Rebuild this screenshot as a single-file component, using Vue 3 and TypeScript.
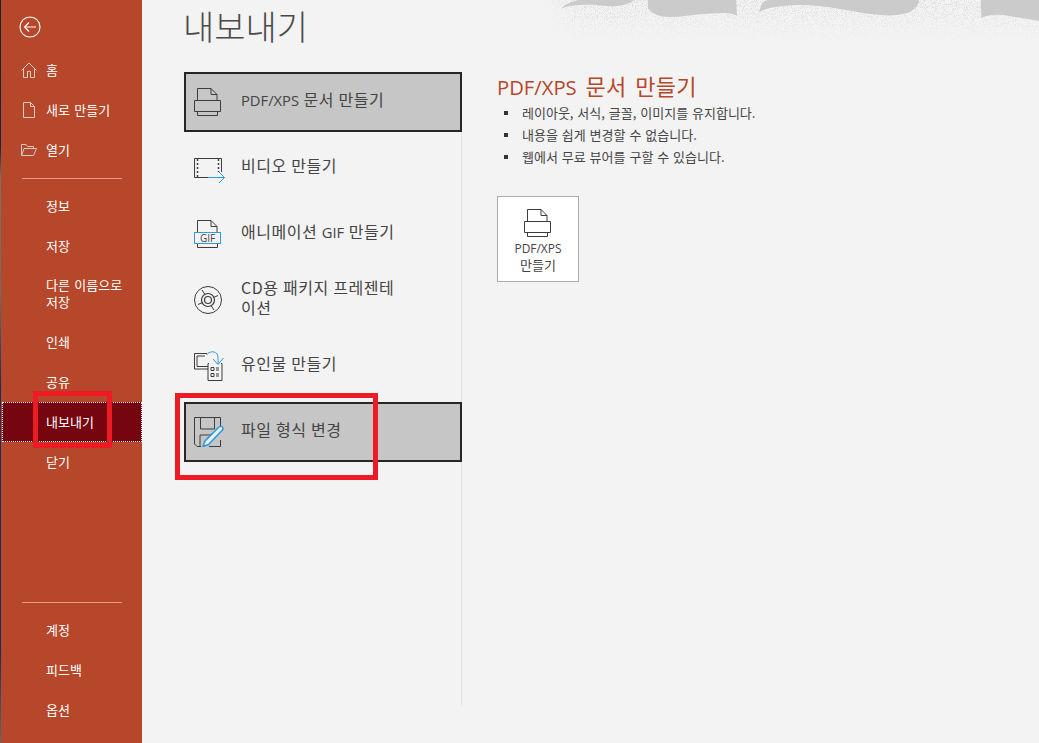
<script setup lang="ts">
interface NavItem {
  label: string
  icon?: 'home' | 'new' | 'open'
  active?: boolean
  tall?: boolean
}

const topNav: NavItem[] = [
  { label: '홈', icon: 'home' },
  { label: '새로 만들기', icon: 'new' },
  { label: '열기', icon: 'open' }
]

const midNav: NavItem[] = [
  { label: '정보' },
  { label: '저장' },
  { label: '다른 이름으로 저장', tall: true },
  { label: '인쇄' },
  { label: '공유' },
  { label: '내보내기', active: true },
  { label: '닫기' }
]

const bottomNav: NavItem[] = [{ label: '계정' }, { label: '피드백' }, { label: '옵션' }]

const bullets = [
  '레이아웃, 서식, 글꼴, 이미지를 유지합니다.',
  '내용을 쉽게 변경할 수 없습니다.',
  '웹에서 무료 뷰어를 구할 수 있습니다.'
]
</script>

<template>
  <div class="window">
    <div class="strip"></div>
    <nav class="sidebar">
      <button class="back" aria-label="뒤로">
        <svg width="22" height="22" viewBox="0 0 22 22" fill="none" stroke="#fff" stroke-width="1.1">
          <circle cx="11" cy="11" r="10" />
          <path d="M17 11H5.500M10 6.500 5.500 11l4.500 4.500" />
        </svg>
      </button>

      <div v-for="item in topNav" :key="item.label" class="nav-item">
        <span class="nav-icon">
          <svg v-if="item.icon === 'home'" width="16" height="16" viewBox="0 0 16 16" fill="none" stroke="#e0cdc6" stroke-width="1">
            <path d="M.5 8.500 8 1l7.500 7.500M2.500 6.500v9h4v-6h3v6h4v-9" />
          </svg>
          <svg v-else-if="item.icon === 'new'" width="12" height="16" viewBox="0 0 12 16" fill="none" stroke="#e0cdc6" stroke-width="1">
            <path d="M.5.5h7l4 4v11H.5zM7.500.5v4h4" />
          </svg>
          <svg v-else width="16" height="12" viewBox="0 0 16 12" fill="none" stroke="#cfcbc8" stroke-width="1">
            <path d="M.5 11.500V.5h4.500l1.500 2h6V4.500M.5 11.500h12l3-7H3z" />
          </svg>
        </span>
        <span class="nav-label">{{ item.label }}</span>
      </div>

      <div class="divider first"></div>

      <div
        v-for="item in midNav"
        :key="item.label"
        class="nav-item plain"
        :class="{ active: item.active, tall: item.tall }"
      >
        <span class="nav-label">{{ item.label }}</span>
      </div>

      <div class="divider last"></div>

      <div v-for="item in bottomNav" :key="item.label" class="nav-item plain">
        <span class="nav-label">{{ item.label }}</span>
      </div>
    </nav>

    <main class="content">
      <svg class="backdrop" width="497" height="42" viewBox="542 0 497 42" aria-hidden="true">
        <defs>
          <filter id="grain" x="0" y="0" width="100%" height="100%" color-interpolation-filters="sRGB">
            <feTurbulence type="fractalNoise" baseFrequency="0.9" numOctaves="2" seed="4" />
            <feColorMatrix values="0 0 0 0 0.86  0 0 0 0 0.86  0 0 0 0 0.86  0 0 0 9 -4.6" />
          </filter>
          <linearGradient id="fade" x1="0" y1="0" x2="0" y2="1">
            <stop offset="0" stop-color="#fff" stop-opacity="0.9" />
            <stop offset="1" stop-color="#fff" stop-opacity="0" />
          </linearGradient>
          <linearGradient id="edge" x1="0" y1="0" x2="1" y2="0">
            <stop offset="0" stop-color="#f3f3f3" />
            <stop offset="1" stop-color="#f3f3f3" stop-opacity="0" />
          </linearGradient>
          <mask id="fadeMask">
            <rect x="542" y="0" width="497" height="42" fill="url(#fade)" />
          </mask>
        </defs>
        <g mask="url(#fadeMask)">
          <rect x="542" y="0" width="497" height="42" filter="url(#grain)" />
        </g>
        <rect x="542" y="0" width="40" height="42" fill="url(#edge)" />
        <g fill="#cbcbcb">
          <path d="M562 8C566 3 572 2 578 0H634C628 5 618 7 606 6 590 4 574 4 562 8Z" />
          <path d="M648 0V8C652 14 660 17 670 17 684 17 700 13 722 13 730 13 735 14 737 16L736 0Z" />
          <path d="M759 12C762 0 766 0 772 0H919C918 8 912 13 898 15 880 17 860 12 840 9 815 4 790 4 775 7 768 8 762 10 759 12Z" />
          <path d="M981 0C980 6 982 12 981 18 990 14 998 14 1010 16L1039 21V0Z" />
        </g>
      </svg>

      <h1 class="title">내보내기</h1>

      <div class="columns">
        <section class="options">
          <div class="option selected">
            <span class="option-slot">
              <svg width="28" height="28" viewBox="0 0 28 28" fill="none" stroke="#3c3c3c" stroke-width="1">
                <path d="M3.500 12V.5H17l6 6V12M17 .5v6h6M.5 12.500h26v11H.5zM3.500 24v3.500h20V24" />
              </svg>
            </span>
            <span class="option-label"><span class="latin">PDF/XPS</span> 문서 만들기</span>
          </div>

          <div class="option">
            <span class="option-slot">
              <svg class="shift-video" width="31" height="26" viewBox="0 0 31 26" fill="none" stroke="#3c3c3c" stroke-width="1">
                <path d="M14 19.500H.5V.5h27V14" />
                <path d="M3.500 1v18M24.500 1v13" stroke-dasharray="2 2" stroke-width="1.500" />
                <path d="M14 19.500h16.500M25 14l5.500 5.500L25 25" stroke="#2f9bdc" />
              </svg>
            </span>
            <span class="option-label">비디오 만들기</span>
          </div>

          <div class="option">
            <span class="option-slot">
              <svg width="28" height="28" viewBox="0 0 28 28" fill="none" stroke="#3c3c3c" stroke-width="1">
                <path d="M3.500 12V.5H17l6 6V12M17 .5v6h6M3.500 24v3.500h20V24" />
                <rect x=".5" y="12.500" width="26" height="11" stroke="#2f9bdc" />
                <text x="13.500" y="22" text-anchor="middle" class="gif-text">GIF</text>
              </svg>
            </span>
            <span class="option-label">애니메이션 <span class="latin">GIF</span> 만들기</span>
          </div>

          <div class="option">
            <span class="option-slot">
              <svg width="28" height="28" viewBox="0 0 28 28" fill="none" stroke="#3c3c3c" stroke-width="1">
                <circle cx="14" cy="14" r="13.500" />
                <circle cx="14" cy="14" r="6.500" stroke-width="1.200" />
                <circle cx="14" cy="14" r="3.500" stroke-width="1.200" />
                <path d="M8 4 11 8.500M20 24 17 19.500M4 18.500 8.500 16.500M24 9.500 19.500 11.500" />
              </svg>
            </span>
            <span class="option-label wrap">CD용 패키지 프레젠테이션</span>
          </div>

          <div class="option">
            <span class="option-slot">
              <svg width="30" height="30" viewBox="0 0 30 30" fill="none" stroke="#3c3c3c" stroke-width="1">
                <path d="M13 2.500H.5v15.500H14M3 5h8M3 5v10.500h11" />
                <path d="M15 12.500h-1v17h14v-17h-1" />
                <path d="M17 16.500h3v3h-3zM17 22.500h3v3h-3zM22 17h3M22 19h3M22 23h3M22 25h3" />
                <path d="M12.500 4C15 0 22 -.5 23.500 4c.7 2 .7 5 .5 9M19 8l5 5.500L29.500 7" stroke="#2f9bdc" />
              </svg>
            </span>
            <span class="option-label">유인물 만들기</span>
          </div>

          <div class="option selected">
            <span class="option-slot">
              <svg width="30" height="30" viewBox="0 0 30 30" fill="none" stroke="#3c3c3c" stroke-width="1">
                <path d="M7 29.500H3l-2.500-2.500V.5h26v12M26.500 23v6.500H15" />
                <path d="M6.500 .5V12h14V.5M6 29V18h14" />
                <path d="M9 29.500 11 24 25 10c1-.9 2.200-.9 3.200 0s1 2.200 0 3.200L14.500 27.500z" fill="#e8f2f8" stroke="#2f9bdc" stroke-width="1.600" />
              </svg>
            </span>
            <span class="option-label">파일 형식 변경</span>
          </div>
        </section>

        <section class="details">
          <h2 class="details-title"><span class="latin">PDF/XPS</span> 문서 만들기</h2>
          <ul class="bullets">
            <li v-for="line in bullets" :key="line">{{ line }}</li>
          </ul>
          <button class="export-btn">
            <svg width="28" height="28" viewBox="0 0 28 28" fill="none" stroke="#3c3c3c" stroke-width="1">
              <path d="M3.500 12V.5H17l6 6V12M17 .5v6h6M.5 12.500h26v11H.5zM3.500 24v3.500h20V24" />
            </svg>
            <span class="export-text"><span class="latin">PDF/XPS</span><br />만들기</span>
          </button>
        </section>
      </div>
    </main>

    <div class="mark mark-nav"></div>
    <div class="mark mark-option"></div>
  </div>
</template>

<style scoped>
.window {
  position: relative;
  display: flex;
  width: 1039px;
  height: 743px;
  overflow: hidden;
  background: #f3f3f3;
  font-family: "Noto Sans CJK KR", "Open Sans", sans-serif;
}

.latin {
  font-family: "Open Sans", sans-serif;
  font-size: 0.92em;
  line-height: 1;
  letter-spacing: 0;
}

.strip {
  flex: 0 0 1px;
  background: linear-gradient(180deg, #222 0, #1c2540 20%, #7d7468 24%, #6f6a62 40%, #1f2d5c 52%, #1f2d5c 88%, #666 100%);
}

.sidebar {
  flex: 0 0 141px;
  display: flex;
  flex-direction: column;
  padding-top: 16px;
  background: #b7472a;
  color: #fff;
  font-size: 13px;
  word-spacing: 1.500px;
}

.back {
  display: block;
  width: 22px;
  height: 22px;
  margin: 0 0 12px 18px;
  padding: 0;
  border: 0;
  background: none;
}

.nav-item {
  display: flex;
  align-items: center;
  height: 40px;
  flex: none;
}

.nav-icon {
  display: flex;
  justify-content: center;
  align-items: center;
  box-sizing: border-box;
  width: 45px;
  padding-left: 13px;
  padding-right: 3px;
}

.nav-icon svg {
  display: block;
}

.nav-item.plain {
  padding-left: 45px;
}

.nav-item.tall {
  height: 56px;
  padding-right: 12px;
  line-height: 17px;
}

.nav-item.active {
  box-sizing: border-box;
  margin-left: 1px;
  outline: 1px dotted #fff;
  outline-offset: -1px;
  background: #750610;
  padding-left: 44px;
}

.nav-label {
  margin-bottom: 2px;
  word-break: keep-all;
}

.divider {
  flex: none;
  height: 1px;
  margin-left: 21px;
  width: 100px;
  background: #e79a85;
}

.divider.first {
  margin-top: 8px;
  margin-bottom: 7px;
}

.divider.last {
  margin-top: auto;
  margin-bottom: 7px;
}

.sidebar > .nav-item:last-child {
  margin-bottom: 13px;
}

.content {
  position: relative;
  flex: 1;
  min-width: 0;
}

.backdrop {
  position: absolute;
  top: 0;
  right: 0;
}

.title {
  position: relative;
  box-sizing: border-box;
  height: 72px;
  margin: 0;
  padding: 1px 0 0 41px;
  font-size: 34px;
  line-height: 50px;
  font-weight: 300;
  color: #4a4a4a;
}

.columns {
  display: flex;
}

.options {
  flex: 0 0 320px;
  box-sizing: border-box;
  height: 633px;
  padding-left: 42px;
  border-right: 1px solid #e1e1e1;
}

.option {
  display: flex;
  align-items: center;
  box-sizing: border-box;
  height: 60px;
  margin-right: -1px;
  margin-bottom: 6px;
  padding-left: 8px;
  border: 2px solid transparent;
  color: #444;
  font-size: 16px;
  letter-spacing: 0.5px;
  word-spacing: 0.5px;
}

.option.selected {
  border-color: #262626;
  background: #c6c6c6;
}

.option-slot {
  flex: 0 0 47px;
  display: flex;
}

.option-slot svg {
  display: block;
}

.shift-video {
  margin-top: 6px;
}

.option-label {
  margin-bottom: 6px;
  line-height: 20px;
}

.option-label.wrap {
  width: 160px;
  word-break: break-all;
}

.gif-text {
  font-family: "Open Sans", sans-serif;
  font-size: 10px;
  letter-spacing: 0;
  fill: #444;
  stroke: none;
}

.details {
  padding-left: 35px;
}

.details-title {
  height: 28px;
  margin: 0;
  font-size: 22px;
  line-height: 26px;
  font-weight: 400;
  letter-spacing: 0.3px;
  word-spacing: 3.500px;
  color: #b7472a;
}

.bullets {
  list-style: none;
  margin: 2px 0 0;
  padding: 0 0 0 25px;
  font-size: 13px;
  line-height: 22px;
  word-spacing: 1px;
  color: #444;
}

.bullets li {
  position: relative;
  height: 22px;
}

.bullets li::before {
  content: "";
  position: absolute;
  left: -18px;
  top: 9px;
  width: 4px;
  height: 4px;
  background: #333;
}

.export-btn {
  display: flex;
  flex-direction: column;
  align-items: center;
  box-sizing: border-box;
  width: 82px;
  height: 86px;
  margin-top: 28px;
  padding: 12px 0 0;
  border: 1px solid #ababab;
  background: #fff;
  color: #444;
  font-family: inherit;
  font-size: 13px;
  line-height: 17px;
}

.export-text {
  margin-top: 2px;
}

.mark {
  position: absolute;
  box-sizing: border-box;
  border: 5px solid #ed1c24;
  pointer-events: none;
}

.mark-nav {
  left: 33px;
  top: 391px;
  width: 79px;
  height: 57px;
}

.mark-option {
  left: 175px;
  top: 393px;
  width: 203px;
  height: 87px;
}
</style>
